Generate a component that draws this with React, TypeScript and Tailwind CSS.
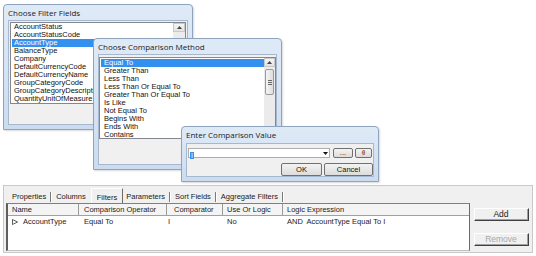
import type { ReactNode } from 'react'

const FIELDS = [
  'AccountStatus',
  'AccountStatusCode',
  'AccountType',
  'BalanceType',
  'Company',
  'DefaultCurrencyCode',
  'DefaultCurrencyName',
  'GroupCategoryCode',
  'GroupCategoryDescription',
  'QuantityUnitOfMeasure',
]

const METHODS = [
  'Equal To',
  'Greater Than',
  'Less Than',
  'Less Than Or Equal To',
  'Greater Than Or Equal To',
  'Is Like',
  'Not Equal To',
  'Begins With',
  'Ends With',
  'Contains',
]

const TABS = ['Properties', 'Columns', 'Filters', 'Parameters', 'Sort Fields', 'Aggregate Filters']

function Win({ className, title, titleH, children }: { className: string; title: string; titleH: string; children: ReactNode }) {
  return (
    <div className={`absolute flex flex-col rounded-t-[4px] border border-[#8fa3bd] bg-gradient-to-b from-[#dfeaf7] to-[#cbdcf0] shadow-[1px_1px_2px_rgba(0,0,0,0.15)] ${className}`}>
      <div className={`flex items-center pl-[4px] font-['Open_Sans',sans-serif] text-[8px] text-[#1a1a1a] ${titleH}`}>{title}</div>
      <div className="mx-[4px] mb-[4px] flex-1 border border-[#a7b8cd] bg-[#f0f0f0]">{children}</div>
    </div>
  )
}

function ScrollUp() {
  return (
    <div className="flex h-[9px] items-center justify-center border border-[#c8c8c8] bg-gradient-to-b from-[#f6f6f6] to-[#e2e2e2]">
      <svg width="5" height="3" viewBox="0 0 5 3"><path d="M0 3 L2.5 0 L5 3 Z" fill="#444" /></svg>
    </div>
  )
}

function Btn({ className, children }: { className: string; children: ReactNode }) {
  return (
    <div className={`flex items-center justify-center rounded-[2px] border border-[#707070] bg-gradient-to-b from-[#f3f3f3] to-[#dcdcdc] text-[7.5px] text-[#111] ${className}`}>
      {children}
    </div>
  )
}

function ClassicBtn({ label, disabled }: { label: string; disabled?: boolean }) {
  return (
    <div className="h-[13px] w-[55px] border-t border-l border-t-white border-l-white border-b border-r border-b-[#404040] border-r-[#404040] bg-[#f0f0f0]">
      <div className={`flex h-full items-center justify-center border-b border-r border-b-[#a0a0a0] border-r-[#a0a0a0] text-[8.5px] ${disabled ? 'text-[#a8a8a8]' : 'text-[#222]'}`}>
        {label}
      </div>
    </div>
  )
}

export default function App() {
  return (
    <div className="relative h-[256px] w-[536px] overflow-hidden bg-white font-['Liberation_Sans',Arial,sans-serif]">
      <div className="relative h-[185px]">
        <Win className="left-[3px] top-[4px] h-[126px] w-[190px]" title="Choose Filter Fields" titleH="h-[15px]">
          <div className="ml-[1px] mr-[1px] mt-[1px] flex h-[82px] border border-[#828790] bg-white">
            <div className="flex-1 overflow-hidden pl-[1px]">
              {FIELDS.map((f, i) => (
                <div key={f} className={`h-[8px] whitespace-nowrap pl-[2px] text-[7.5px] leading-[8px] ${i === 2 ? 'bg-[#3390ee] text-white' : 'text-[#111]'}`}>{f}</div>
              ))}
            </div>
            <div className="w-[12px] bg-[#ececec]">
              <ScrollUp />
            </div>
          </div>
        </Win>

        <Win className="left-[93px] top-[38px] h-[132px] w-[189px]" title="Choose Comparison Method" titleH="h-[15px]">
          <div className="mt-[2px] flex h-[82px] border border-[#828790] bg-white">
            <div className="flex-1 overflow-hidden pt-[1px] pl-[1px]">
              {METHODS.map((m, i) => (
                <div key={m} className={`h-[8px] whitespace-nowrap pl-[3px] text-[7.5px] leading-[8px] ${i === 0 ? 'bg-[#3390ee] text-white' : 'text-[#111]'}`}>{m}</div>
              ))}
            </div>
            <div className="flex w-[11px] flex-col bg-[#ebebeb]">
              <ScrollUp />
              <div className="mx-[1px] mt-[2px] flex h-[26px] flex-col items-center justify-center gap-[1px] rounded-[2px] border border-[#9a9a9a] bg-gradient-to-r from-[#f4f4f4] to-[#dedede]">
                <div className="h-px w-[4px] bg-[#666]" />
                <div className="h-px w-[4px] bg-[#666]" />
                <div className="h-px w-[4px] bg-[#666]" />
              </div>
            </div>
          </div>
        </Win>

        <Win className="left-[181px] top-[126px] h-[56px] w-[198px]" title="Enter Comparison Value" titleH="h-[16px]">
          <div className="flex flex-col pl-[1px] pt-[4px]">
            <div className="flex h-[10px] items-center">
              <div className="flex h-[10px] w-[142px] items-center border border-[#abadb3] bg-white">
                <div className="flex-1 pl-[1px]">
                  <span className="bg-[#3390ee] px-px text-[7px] leading-[8px] text-white">I</span>
                </div>
                <div className="flex h-full w-[8px] items-center justify-center">
                  <svg width="5" height="3" viewBox="0 0 5 3"><path d="M0 0 L5 0 L2.5 3 Z" fill="#111" /></svg>
                </div>
              </div>
              <Btn className="ml-[3px] h-[10px] w-[20px]">...</Btn>
              <Btn className="ml-[2px] h-[10px] w-[17px]"><span className="text-[6.5px] font-bold text-[#9a5a3a]">θ</span></Btn>
            </div>
            <div className="mt-[5px] flex gap-[2px] pl-[93px]">
              <Btn className="h-[13px] w-[41px]">OK</Btn>
              <Btn className="h-[13px] w-[49px]">Cancel</Btn>
            </div>
          </div>
        </Win>
      </div>

      <div className="mx-[3px] flex h-[68px] flex-col border border-[#c9c9c9] bg-[#f0f0f0]">
        <div className="flex h-[17px] items-end pl-[6px] text-[7.5px] text-[#1a1a1a]">
          {TABS.map((t, i) =>
            t === 'Filters' ? (
              <div key={t} className="mr-[1px] flex h-[15px] items-start border-l border-t border-r border-l-white border-t-white border-r-[#6b6b6b] px-[5px] pt-[3px]">
                {t}
              </div>
            ) : (
              <div key={t} className="flex h-[12px] items-center">
                <span className="px-[2px]">{t}</span>
                {i !== 1 && (
                  <div className="ml-[2px] mr-[2px] flex h-[10px]">
                    <div className="w-px bg-[#7a7a7a]" />
                    <div className="w-px bg-white" />
                  </div>
                )}
                {i === 1 && <div className="w-[3px]" />}
              </div>
            ),
          )}
        </div>
        <div className="flex flex-1 pl-[2px] pb-[1px]">
          <div className="flex w-[464px] flex-col border-t border-r border-b border-l-2 border-t-[#808080] border-r-[#6b6b6b] border-b-[#c0c0c0] border-l-[#5e5e5e] bg-white">
            <div className="flex h-[12px] border-b border-[#a0a0a0] bg-[#f4f4f4] text-[7.5px] text-[#1a1a1a]">
              <div className="flex w-[71px] items-center border-r border-[#9a9a9a] pl-[4px]">Name</div>
              <div className="flex w-[88px] items-center border-r border-[#9a9a9a] pl-[5px]">Comparison Operator</div>
              <div className="flex w-[56px] items-center border-r border-[#9a9a9a] pl-[7px]">Comparator</div>
              <div className="flex w-[60px] items-center border-r border-[#9a9a9a] pl-[4px]">Use Or Logic</div>
              <div className="flex flex-1 items-center pl-[4px]">Logic Expression</div>
            </div>
            <div className="flex h-[12px] text-[7.5px] text-[#1a1a1a]">
              <div className="flex w-[71px] items-center gap-[5px] pl-[4px]">
                <svg width="6" height="6" viewBox="0 0 6 6"><path d="M0.5 0.5 L5.5 3 L0.5 5.5 Z" fill="none" stroke="#333" strokeWidth="0.8" /></svg>
                AccountType
              </div>
              <div className="flex w-[88px] items-center pl-[5px]">Equal To</div>
              <div className="flex w-[56px] items-center pl-[1px]">I</div>
              <div className="flex w-[60px] items-center pl-[4px]">No</div>
              <div className="flex flex-1 items-center pl-[4px] whitespace-pre">AND  AccountType Equal To I</div>
            </div>
          </div>
          <div className="flex flex-col gap-[12px] pl-[4px] pt-[5px]">
            <ClassicBtn label="Add" />
            <ClassicBtn label="Remove" disabled />
          </div>
        </div>
      </div>
    </div>
  )
}
